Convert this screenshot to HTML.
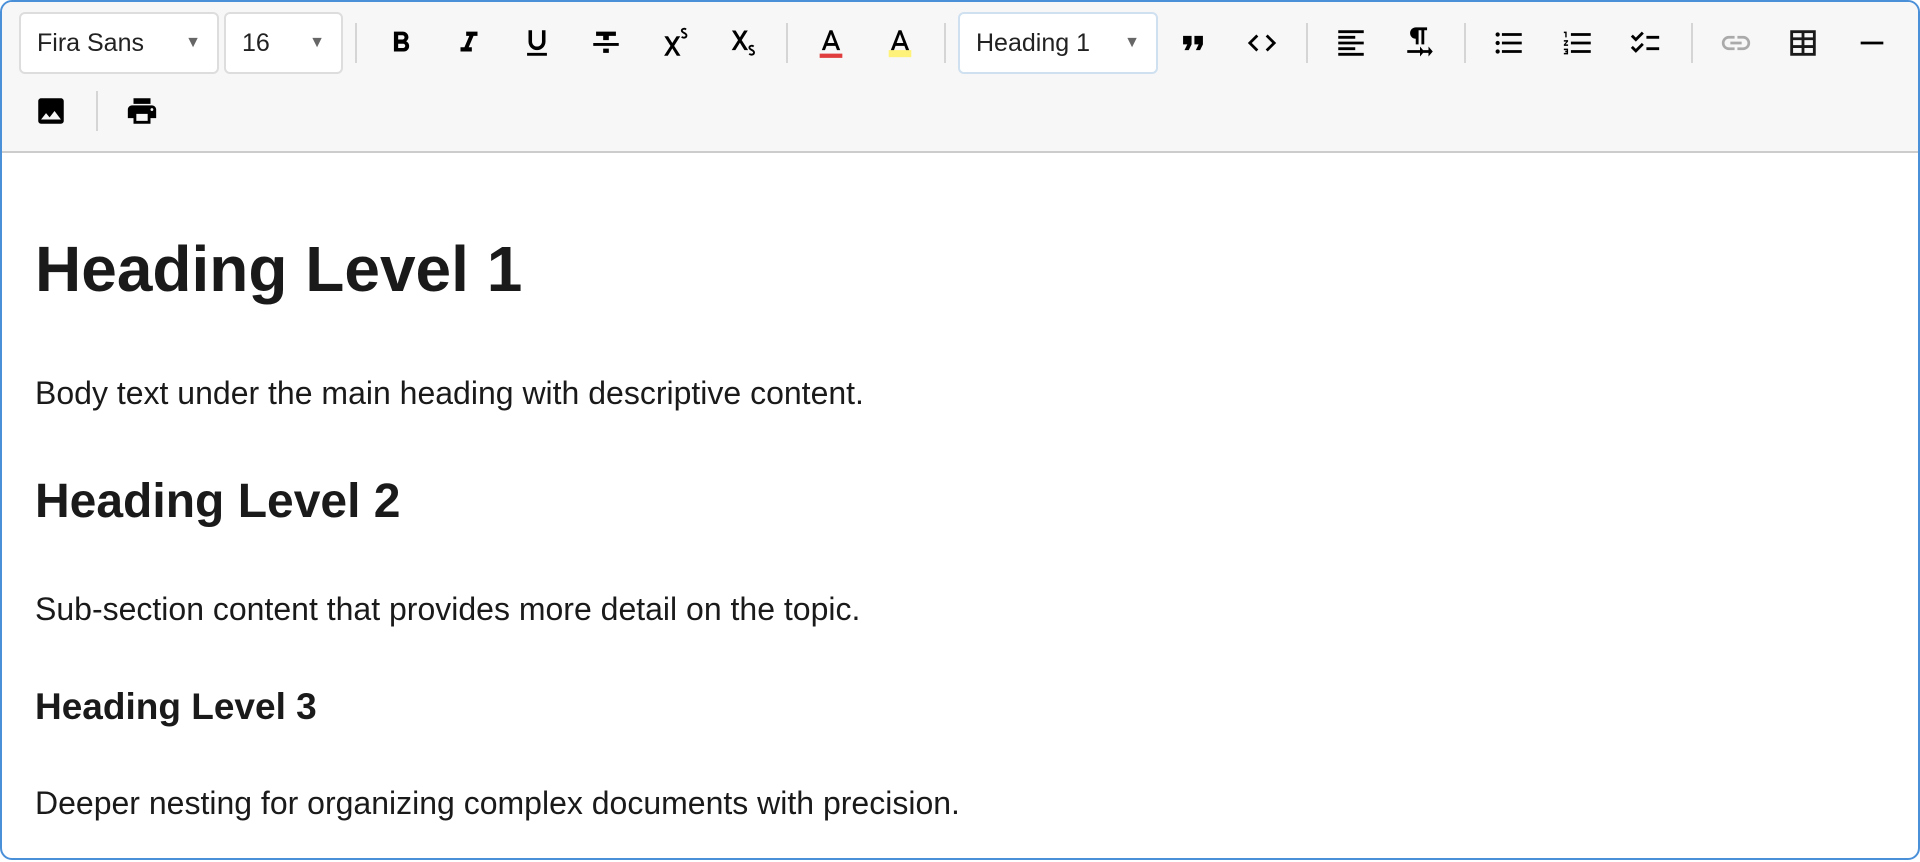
<!DOCTYPE html>
<html><head><meta charset="utf-8"><style>
*{box-sizing:border-box;margin:0;padding:0}
html,body{width:1920px;height:862px;background:#fff;overflow:hidden;font-family:"Liberation Sans",sans-serif;color:#1a1a1a}
.box{position:absolute;left:0;top:0;width:1920px;height:860px;border:2px solid #4a90d9;border-radius:12px;overflow:hidden}
.tb{position:absolute;left:0;top:0;width:1916px;height:151px;background:#f7f7f7;border-bottom:2px solid #ccc}
.sel{position:absolute;top:10px;height:62px;background:#fff;border:2px solid #ddd;border-radius:6px;font-size:25px;line-height:58px;padding-left:16px;color:#222}
.sel .ar{position:absolute;right:16px;top:0;font-size:16px;color:#666}
.sep{position:absolute;width:2px;height:40px;background:#d5d5d5}
.ic{position:absolute;width:34px;height:34px;margin-left:-17px;margin-top:-17px}
.t{position:absolute;left:33px;white-space:nowrap}
</style></head><body>
<div class="box">
<div class="tb">
<div class="sel" style="left:17px;width:200px">Fira Sans<span class="ar">▼</span></div>
<div class="sel" style="left:222px;width:119px">16<span class="ar">▼</span></div>
<div class="sep" style="left:353px;top:21px"></div>
<svg class="ic" style="left:399px;top:41px" viewBox="0 0 24 24"><path d="M15.6 10.79c.97-.67 1.65-1.770 1.65-2.79 0-2.26-1.75-4-4-4H7v14h7.04c2.09 0 3.71-1.7 3.71-3.790 0-1.52-.86-2.82-2.150-3.42zM10 6.5h3c.83 0 1.5.67 1.5 1.5s-.67 1.5-1.5 1.5h-3v-3zm3.5 9H10v-3h3.5c.83 0 1.5.67 1.5 1.5s-.67 1.5-1.5 1.5z"/></svg>
<svg class="ic" style="left:467px;top:41px" viewBox="0 0 24 24"><path d="M10 4v3h2.21l-3.42 8H6v3h8v-3h-2.21l3.42-8H18V4z"/></svg>
<svg class="ic" style="left:535px;top:41px" viewBox="0 0 24 24"><path d="M12 17c3.31 0 6-2.69 6-6V3h-2.5v8c0 1.93-1.57 3.5-3.5 3.5S8.5 12.930 8.5 11V3H6v8c0 3.31 2.69 6 6 6zm-7 2v2h14v-2H5z"/></svg>
<svg class="ic" style="left:604px;top:41px" viewBox="0 0 24 24"><path d="M10 19h4v-3h-4v3zM5 4v3h5v3h4V7h5V4H5zM3 14h18v-2H3v2z"/></svg>
<svg class="ic" style="left:672px;top:41px" viewBox="0 0 24 24"><path d="M5 21h2.6l3.2-5.2 3.2 5.2h2.6l-4.5-7 4.3-6.8h-2.6l-3 4.8-3-4.8H5.2l4.3 6.8z"/><path d="M20.5 2.5c-1-1-3-.6-3 .8 0 1.7 3.3 1.4 3.3 3.4 0 1.6-2.3 2-3.4.9" fill="none" stroke="#000" stroke-width="1.3"/></svg>
<svg class="ic" style="left:741px;top:41px" viewBox="0 0 24 24"><path d="M4 17h2.6l3.2-5.2 3.2 5.2h2.6l-4.5-7 4.3-6.8h-2.6l-3 4.8-3-4.8H4.2l4.3 6.8z"/><path d="M19.5 14.5c-1-1-3-.6-3 .8 0 1.7 3.3 1.4 3.3 3.4 0 1.6-2.3 2-3.4.9" fill="none" stroke="#000" stroke-width="1.3"/></svg>
<div class="sep" style="left:784px;top:21px"></div>
<svg class="ic" style="left:829px;top:41px" viewBox="0 0 24 24"><path d="M11 3L5.5 17h2.25l1.12-3h6.25l1.12 3h2.25L13 3h-2zm-1.38 9L12 5.67 14.38 12H9.62z"/><rect x="4" y="19.5" width="16" height="3" fill="#e03e3e"/></svg>
<svg class="ic" style="left:898px;top:41px" viewBox="0 0 24 24"><rect x="4" y="17" width="16" height="5" fill="#fff27a"/><path d="M11 3L5.5 17h2.25l1.12-3h6.25l1.12 3h2.25L13 3h-2zm-1.38 9L12 5.67 14.38 12H9.62z"/></svg>
<div class="sep" style="left:942px;top:21px"></div>
<div class="sel" style="left:956px;width:200px;border-color:#cfe0f0">Heading 1<span class="ar">▼</span></div>
<svg class="ic" style="left:1191px;top:41px" viewBox="0 0 24 24"><path d="M6 17h3l2-4V7H5v6h3zm8 0h3l2-4V7h-6v6h3z"/></svg>
<svg class="ic" style="left:1260px;top:41px" viewBox="0 0 24 24"><path d="M9.4 16.6L4.8 12l4.6-4.6L8 6l-6 6 6 6 1.4-1.4zm5.2 0l4.6-4.6-4.6-4.6L16 6l6 6-6 6-1.4-1.4z"/></svg>
<div class="sep" style="left:1304px;top:21px"></div>
<svg class="ic" style="left:1349px;top:41px" viewBox="0 0 24 24"><path d="M15 15H3v2h12v-2zm0-8H3v2h12V7zM3 13h18v-2H3v2zm0 8h18v-2H3v2zM3 3v2h18V3H3z"/></svg>
<svg class="ic" style="left:1418px;top:41px" viewBox="0 0 24 24"><path d="M9 9v4h2V3h2v10h2V3h2V1H9C6.79 1 5 2.79 5 5s1.79 4 4 4z"/><path d="M3 17h9v-2.5l3 3.5-3 3.5V19H3zM12 17h6v-2.5l3 3.5-3 3.5V19h-6z"/></svg>
<div class="sep" style="left:1462px;top:21px"></div>
<svg class="ic" style="left:1507px;top:41px" viewBox="0 0 24 24"><path d="M4 10.5c-.83 0-1.5.67-1.5 1.5s.67 1.5 1.5 1.5 1.5-.67 1.5-1.5-.67-1.5-1.5-1.5zm0-6c-.83 0-1.5.67-1.5 1.5S3.17 7.5 4 7.5 5.5 6.83 5.5 6 4.83 4.5 4 4.5zm0 12c-.83 0-1.5.68-1.5 1.5s.68 1.5 1.5 1.5 1.5-.68 1.5-1.5-.67-1.5-1.5-1.5zM7 19h14v-2H7v2zm0-6h14v-2H7v2zm0-8v2h14V5H7z"/></svg>
<svg class="ic" style="left:1576px;top:41px" viewBox="0 0 24 24"><path d="M2 17h2v.5H3v1h1v.5H2v1h3v-4H2v1zm1-9h1V4H2v1h1v3zm-1 3h1.8L2 13.1v.9h3v-1H3.2L5 10.9V10H2v1zm5-6v2h14V5H7zm0 14h14v-2H7v2zm0-6h14v-2H7v2z"/></svg>
<svg class="ic" style="left:1643px;top:41px" viewBox="0 0 24 24"><path d="M22 7h-9v2h9V7zm0 8h-9v2h9v-2zM5.54 11L2 7.46l1.41-1.41 2.12 2.12 4.24-4.24 1.41 1.41L5.54 11zm0 8L2 15.46l1.41-1.41 2.12 2.12 4.24-4.24 1.41 1.41L5.54 19z"/></svg>
<div class="sep" style="left:1689px;top:21px"></div>
<svg class="ic" style="left:1734px;top:41px" viewBox="0 0 24 24" fill="#aaa"><path d="M3.9 12c0-1.71 1.39-3.1 3.1-3.1h4V7H7c-2.76 0-5 2.24-5 5s2.24 5 5 5h4v-1.9H7c-1.710 0-3.1-1.39-3.1-3.1zM8 13h8v-2H8v2zm9-6h-4v1.9h4c1.71 0 3.1 1.39 3.1 3.1s-1.39 3.1-3.1 3.1h-4V17h4c2.76 0 5-2.24 5-5s-2.24-5-5-5z"/></svg>
<svg class="ic" style="left:1801px;top:41px" viewBox="0 0 24 24" fill="none" stroke="#1a1a1a" stroke-width="2"><rect x="4" y="4" width="16" height="16"/><path d="M4 9h16M4 14.5h16M12 4v16"/></svg>
<svg class="ic" style="left:1870px;top:41px" viewBox="0 0 24 24"><path d="M4 11h16v2H4z"/></svg>
<svg class="ic" style="left:49px;top:109px" viewBox="0 0 24 24"><path d="M21 19V5c0-1.1-.9-2-2-2H5c-1.1 0-2 .9-2 2v14c0 1.1.9 2 2 2h14c1.1 0 2-.9 2-2zM8.5 13.5l2.5 3.01L14.5 12l4.5 6H5l3.5-4.5z"/></svg>
<div class="sep" style="left:94px;top:89px"></div>
<svg class="ic" style="left:140px;top:109px" viewBox="0 0 24 24"><path d="M19 8H5c-1.66 0-3 1.34-3 3v6h4v4h12v-4h4v-6c0-1.66-1.34-3-3-3zm-3 11H8v-5h8v5zm3-7c-.55 0-1-.45-1-1s.45-1 1-1 1 .45 1 1-.45 1-1 1zm-1-9H6v4h12V3z"/></svg>
</div>
<div class="t" style="top:229px;font-size:64px;line-height:77px;font-weight:bold">Heading Level 1</div>
<div class="t" style="top:373px;font-size:32px;line-height:36px">Body text under the main heading with descriptive content.</div>
<div class="t" style="top:471px;font-size:48px;line-height:58px;font-weight:bold">Heading Level 2</div>
<div class="t" style="top:589px;font-size:32px;line-height:36px">Sub-section content that provides more detail on the topic.</div>
<div class="t" style="top:683px;font-size:37px;line-height:44px;font-weight:bold">Heading Level 3</div>
<div class="t" style="top:783px;font-size:32px;line-height:36px">Deeper nesting for organizing complex documents with precision.</div>
</div>
</body></html>
